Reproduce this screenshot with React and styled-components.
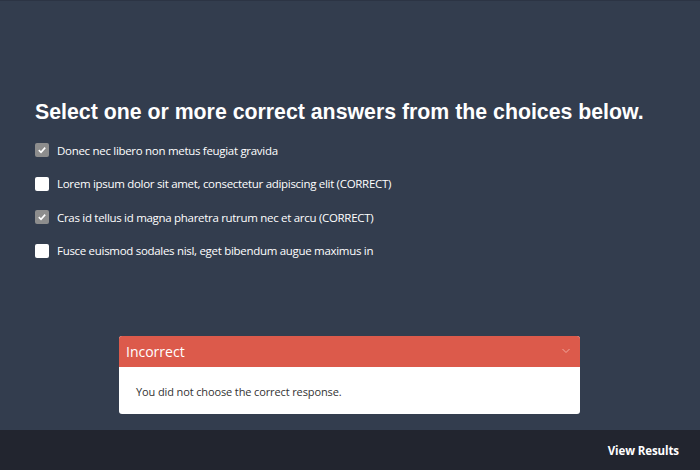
import React from 'react';
import styled, { createGlobalStyle } from 'styled-components';

const GlobalStyle = createGlobalStyle`
  html, body {
    margin: 0;
    padding: 0;
    height: 100%;
  }
  body {
    background-color: #333d4e;
    font-family: "Open Sans", "Noto Sans", sans-serif;
  }
`;

const Page = styled.div`
  width: 700px;
  height: 470px;
  display: flex;
  flex-direction: column;
  background-color: #333d4e;
  border-top: 1px solid #2c3444;
  box-sizing: border-box;
`;

const Content = styled.div`
  flex: 1;
  display: flex;
  flex-direction: column;
  padding: 98px 35px 0 35px;
`;

const Title = styled.h1`
  margin: 0 0 15px 0;
  font-family: "Liberation Sans", Arial, sans-serif;
  font-weight: bold;
  font-size: 21.3px;
  line-height: 26px;
  color: #ffffff;
`;

const ChoiceList = styled.div`
  display: flex;
  flex-direction: column;
  gap: 13.5px;
`;

const Choice = styled.label`
  display: flex;
  align-items: center;
  gap: 8px;
  height: 20px;
  font-size: 11.5px;
  letter-spacing: -0.3px;
  color: #ffffff;
`;

const Box = styled.span`
  width: 14px;
  height: 14px;
  border-radius: 2px;
  flex-shrink: 0;
  display: flex;
  align-items: center;
  justify-content: center;
  background-color: ${({ checked }) => (checked ? '#8d8d8d' : '#ffffff')};
`;

const Feedback = styled.div`
  margin: 75px 0 0 84px;
  width: 461px;
  border-radius: 3px;
  overflow: hidden;
  background-color: #ffffff;
`;

const FeedbackHeader = styled.div`
  height: 31px;
  display: flex;
  align-items: center;
  justify-content: space-between;
  padding: 0 10px 0 7px;
  background-color: #dc5a4b;
  color: #ffffff;
  font-size: 14px;
`;

const FeedbackBody = styled.div`
  padding: 17px 17px 15px 17px;
  font-size: 11px;
  line-height: 15px;
  letter-spacing: -0.12px;
  color: #333333;
`;

const Footer = styled.div`
  height: 40px;
  flex-shrink: 0;
  display: flex;
  align-items: center;
  justify-content: flex-end;
  padding: 0 21px;
  background-color: #22252f;
`;

const ResultsButton = styled.button`
  background: none;
  border: none;
  padding: 0;
  font-family: "Open Sans", sans-serif;
  font-weight: bold;
  font-size: 11.5px;
  letter-spacing: -0.1px;
  color: #ffffff;
  cursor: pointer;
`;

const choices = [
  { text: 'Donec nec libero non metus feugiat gravida', checked: true },
  { text: 'Lorem ipsum dolor sit amet, consectetur adipiscing elit (CORRECT)', checked: false },
  { text: 'Cras id tellus id magna pharetra rutrum nec et arcu (CORRECT)', checked: true },
  { text: 'Fusce euismod sodales nisl, eget bibendum augue maximus in', checked: false },
];

const Check = () => (
  <svg width="10" height="10" viewBox="0 0 10 10">
    <path d="M1.8 5.2 L4 7.3 L8.2 2.6" fill="none" stroke="#ffffff" strokeWidth="1.6" />
  </svg>
);

const Chevron = () => (
  <svg width="8" height="6" viewBox="0 0 8 6">
    <path d="M0.5 1 L4 4.5 L7.5 1" fill="none" stroke="#f0a79d" strokeWidth="1" />
  </svg>
);

const App = () => {
  return (
    <Page>
      <GlobalStyle />
      <Content>
        <Title>Select one or more correct answers from the choices below.</Title>
        <ChoiceList>
          {choices.map((choice) => (
            <Choice key={choice.text}>
              <Box checked={choice.checked}>{choice.checked && <Check />}</Box>
              {choice.text}
            </Choice>
          ))}
        </ChoiceList>
        <Feedback>
          <FeedbackHeader>
            Incorrect
            <Chevron />
          </FeedbackHeader>
          <FeedbackBody>You did not choose the correct response.</FeedbackBody>
        </Feedback>
      </Content>
      <Footer>
        <ResultsButton>View Results</ResultsButton>
      </Footer>
    </Page>
  );
};

export default App;
